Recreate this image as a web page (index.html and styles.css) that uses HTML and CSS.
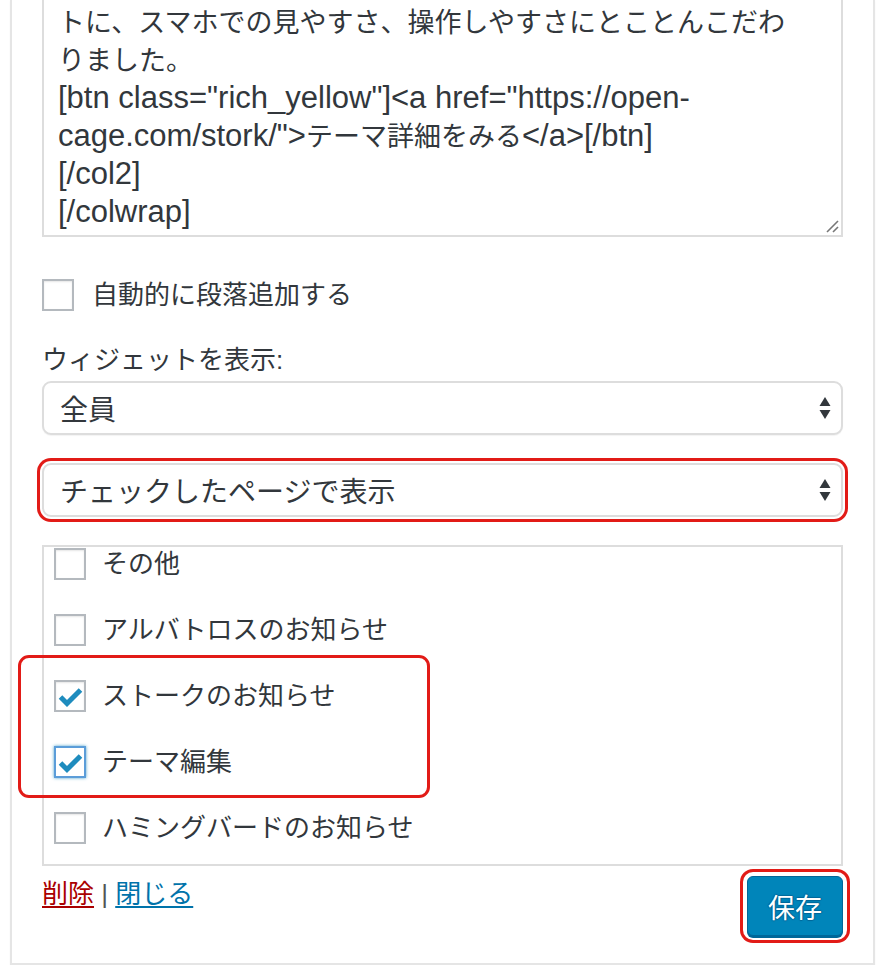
FILE: index.html
```html
<!DOCTYPE html>
<html lang="ja">
<head>
    <meta charset="UTF-8">
    <meta name="viewport" content="width=device-width, initial-scale=1.0">
    <title>テキストウィジェット</title>
    <link rel="stylesheet" href="styles.css">
</head>
<body>
    <div class="widget">
        <div class="content-box">
            <div class="code-text">
                <div class="line"><span class="jp">トに、スマホでの見やすさ、操作しやすさにとことんこだわ</span></div>
                <div class="line"><span class="jp">りました。</span></div>
                <div class="line">[btn class="rich_yellow"]&lt;a href="https://open-</div>
                <div class="line">cage.com/stork/"&gt;<span class="jp">テーマ詳細をみる</span>&lt;/a&gt;[/btn]</div>
                <div class="line">[/col2]</div>
                <div class="line">[/colwrap]</div>
            </div>
            <svg class="grip" width="14" height="14" viewBox="0 0 14 14">
                <line x1="2" y1="13" x2="13" y2="2" stroke="#777" stroke-width="1.6"/>
                <line x1="8" y1="13" x2="13" y2="8" stroke="#777" stroke-width="1.6"/>
            </svg>
        </div>

        <label class="check-row auto-p">
            <span class="box"></span>
            <span>自動的に段落追加する</span>
        </label>

        <div class="field-label">ウィジェットを表示:</div>
        <div class="select">
            <span>全員</span>
            <svg class="arrows" width="12" height="24" viewBox="0 0 12 24">
                <path d="M6 1 L11.5 10 H0.5 Z" fill="#32373c"/>
                <path d="M6 23 L11.5 14 H0.5 Z" fill="#32373c"/>
            </svg>
        </div>
        <div class="select marked">
            <span>チェックしたページで表示</span>
            <svg class="arrows" width="12" height="24" viewBox="0 0 12 24">
                <path d="M6 1 L11.5 10 H0.5 Z" fill="#32373c"/>
                <path d="M6 23 L11.5 14 H0.5 Z" fill="#32373c"/>
            </svg>
        </div>

        <div class="page-list-wrap">
            <div class="page-list">
                <ul>
                    <li><label class="check-row"><span class="box"></span><span>その他</span></label></li>
                    <li><label class="check-row"><span class="box"></span><span>アルバトロスのお知らせ</span></label></li>
                    <li>
                        <label class="check-row">
                            <span class="box">
                                <svg width="32" height="32" viewBox="0 0 32 32"><polyline points="6.5,17 13,23.5 26.5,10" fill="none" stroke="#1e8cbe" stroke-width="5"/></svg>
                            </span>
                            <span>ストークのお知らせ</span>
                        </label>
                    </li>
                    <li>
                        <label class="check-row">
                            <span class="box focus">
                                <svg width="32" height="32" viewBox="0 0 32 32"><polyline points="6.5,17 13,23.5 26.5,10" fill="none" stroke="#1e8cbe" stroke-width="5"/></svg>
                            </span>
                            <span>テーマ編集</span>
                        </label>
                    </li>
                    <li><label class="check-row"><span class="box"></span><span>ハミングバードのお知らせ</span></label></li>
                </ul>
            </div>
            <div class="mark-box"></div>
        </div>

        <div class="actions">
            <div class="links">
                <a href="#" class="delete">削除</a> | <a href="#" class="close">閉じる</a>
            </div>
            <button class="save">保存</button>
        </div>
    </div>
</body>
</html>
```

FILE: styles.css
```css
body {
    margin: 0;
    background: #fff;
    color: #32373c;
    font-family: "Liberation Sans", "Noto Sans CJK JP", sans-serif;
}

.widget {
    margin: 0 13px 0 10px;
    padding: 0 30px 27px 30px;
    border: 2px solid #e5e5e5;
    border-top: none;
    box-shadow: 0 1px 2px rgba(0, 0, 0, 0.04);
}

.content-box {
    position: relative;
    height: 237px;
    box-sizing: border-box;
    padding: 3px 14px 4px 14px;
    border: 2px solid #ddd;
    border-top: none;
    overflow: hidden;
}

.code-text {
    font-size: 31px;
    color: #32373c;
    white-space: nowrap;
}

.line {
    height: 38px;
    line-height: 38px;
}

.jp {
    font-size: 27px;
}

.grip {
    position: absolute;
    right: 2px;
    bottom: 2px;
}

.check-row {
    display: flex;
    align-items: center;
    gap: 16px;
    font-size: 26px;
    line-height: 32px;
}

.box {
    position: relative;
    width: 32px;
    height: 32px;
    box-sizing: border-box;
    border: 2px solid #b4b9be;
    background: #fff;
    box-shadow: inset 0 1px 2px rgba(0, 0, 0, 0.1);
    flex-shrink: 0;
}

.box.focus {
    border-color: #5b9dd9;
    box-shadow: 0 0 3px rgba(30, 140, 190, 0.8);
}

.box svg {
    position: absolute;
    left: -2px;
    top: -2px;
}

.auto-p {
    margin-top: 42px;
    gap: 18px;
}

.field-label {
    margin-top: 32px;
    font-size: 26px;
    line-height: 34px;
}

.select {
    display: flex;
    align-items: center;
    justify-content: space-between;
    height: 54px;
    box-sizing: border-box;
    margin-top: 4px;
    padding: 0 10px 0 16px;
    border: 2px solid #ddd;
    border-radius: 9px;
    background: #fff;
    box-shadow: 0 1px 1px rgba(0, 0, 0, 0.05);
    font-size: 28px;
}

.select.marked {
    margin-top: 28px;
    box-shadow: 0 0 0 2px #fff, 0 0 0 5px #e21b17;
}

.page-list-wrap {
    position: relative;
    margin-top: 28px;
}

.page-list {
    height: 321px;
    box-sizing: border-box;
    border: 2px solid #ddd;
    overflow: hidden;
}

.page-list ul {
    list-style: none;
    margin: -16px 0 0 0;
    padding: 0 0 0 10px;
}

.page-list li {
    display: flex;
    align-items: center;
    height: 66px;
}

.mark-box {
    position: absolute;
    left: -24px;
    top: 110px;
    width: 412px;
    height: 143px;
    box-sizing: border-box;
    border: 3px solid #e21b17;
    border-radius: 11px;
}

.actions {
    display: flex;
    justify-content: space-between;
    align-items: flex-start;
    margin-top: 10px;
}

.links {
    margin-top: 1px;
    font-size: 26px;
    line-height: 34px;
    color: #555;
}

.links a {
    text-decoration: underline;
    text-underline-offset: 3px;
}

.delete {
    color: #a00;
}

.close {
    color: #0073aa;
}

.save {
    width: 96px;
    height: 60px;
    padding: 0;
    border: 1px solid #006799;
    border-radius: 6px;
    background: #0085ba;
    box-shadow: 0 2px 0 #006799, 0 0 0 4px #fff, 0 0 0 7px #e21b17;
    color: #fff;
    font-family: "Noto Sans CJK JP", sans-serif;
    font-size: 27px;
    text-shadow: 0 -1px 1px #006799, 1px 0 1px #006799, 0 1px 1px #006799, -1px 0 1px #006799;
    cursor: pointer;
}
```
